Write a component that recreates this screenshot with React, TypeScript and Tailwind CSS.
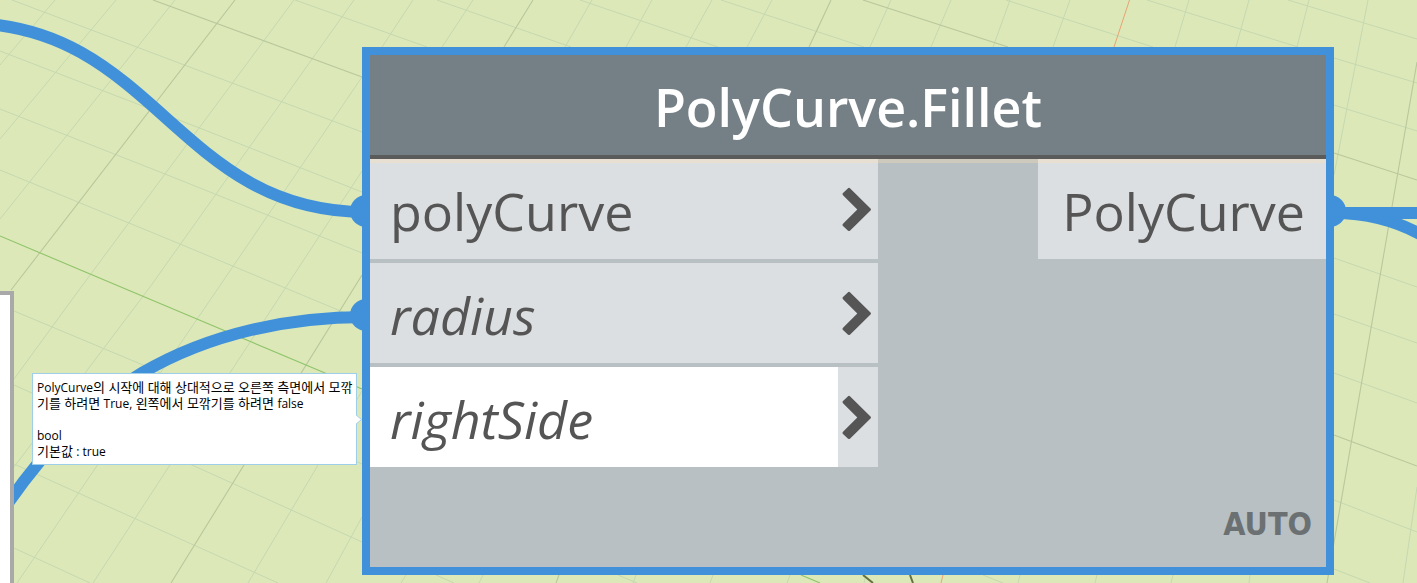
type Segment = [number, number, number, number];

const minorLines: Segment[][] = [
  // receding lines
  [[55, 0, 0, 65]],
  [[116, 0, 0, 139]],
  [[175, 0, 0, 219]],
  [[294, 0, 79, 290], [79, 290, 14, 379]],
  [[354, 0, 150, 287], [150, 287, 14, 467]],
  [[413, 0, 382, 47], [362, 77, 219, 287], [219, 287, 17, 583]],
  [[473, 0, 442, 47], [362, 171, 286, 287], [286, 287, 93, 583]],
  [[592, 0, 565, 47], [362, 391, 248, 583]],
  [[652, 0, 626, 47], [362, 517, 326, 583]],
  [[712, 0, 686, 47], [406, 575, 401, 583]],
  [[772, 0, 747, 47], [483, 575, 479, 583]],
  [[891, 0, 870, 47], [636, 575, 633, 583]],
  [[951, 0, 931, 47], [713, 575, 710, 583]],
  [[1010, 0, 993, 47], [790, 575, 787, 583]],
  [[1070, 0, 1053, 47], [866, 575, 864, 583]],
  [[1189, 0, 1175, 47], [1020, 575, 1018, 583]],
  [[1249, 0, 1236, 47], [1097, 575, 1095, 583]],
  [[1309, 0, 1297, 47], [1173, 575, 1171, 583]],
  [[1368, 0, 1334, 175], [1250, 575, 1249, 583]],
  [[1417, 487, 1403, 583]],
  // crossing lines
  [[12, 0, 362, 132]],
  [[295, 0, 427, 47]],
  [[437, 0, 571, 47]],
  [[580, 0, 718, 47]],
  [[721, 0, 864, 47]],
  [[1006, 0, 1153, 47]],
  [[1147, 0, 1298, 47]],
  [[1288, 0, 1417, 39]],
  [[1334, 58, 1417, 83]],
  [[1334, 105, 1417, 131]],
  [[1334, 258, 1417, 287]],
  [[1334, 314, 1417, 343]],
  [[1334, 373, 1417, 403]],
  [[1334, 500, 1417, 532]],
  [[1334, 569, 1370, 583]],
  [[0, 51, 197, 127], [197, 127, 362, 192]],
  [[0, 109, 165, 174], [165, 174, 362, 253]],
  [[0, 170, 180, 244], [180, 244, 362, 320]],
  [[14, 311, 143, 365], [143, 365, 362, 464]],
  [[14, 385, 192, 465], [192, 465, 362, 542]],
  [[14, 464, 278, 583]],
  [[14, 548, 90, 583]],
  [[436, 575, 454, 583]],
  [[618, 575, 637, 583]],
  [[983, 575, 1003, 583]],
];

const majorLines: Segment[] = [
  [235, 0, 11, 290],
  [533, 0, 504, 47],
  [362, 275, 244, 465],
  [244, 465, 171, 583],
  [831, 0, 809, 47],
  [559, 575, 556, 583],
  [1417, 62, 1327, 583],
  [153, 0, 362, 77],
  [863, 0, 1008, 47],
  [1334, 153, 1417, 180],
  [1334, 435, 1417, 466],
];

const toPath = (lines: Segment[]) =>
  lines.map(([x1, y1, x2, y2]) => `M${x1} ${y1}L${x2} ${y2}`).join("");

function Workspace() {
  return (
    <svg
      className="absolute top-0 left-0"
      width="1417"
      height="583"
      viewBox="0 0 1417 583"
      fill="none"
      aria-hidden="true"
    >
      <path d={toPath(minorLines.flat())} stroke="#c6d8b0" />
      <path d={toPath(majorLines)} stroke="#b9c79b" strokeWidth="1.1" />
      <path d="M0 236L128 290L223 330L325 373L362 389M801 575L820 583" stroke="#8fc46a" strokeWidth="1.1" />
      <path d="M1129.500 0L1114 47M943 575L941 583" stroke="#e8a374" />
      <path d="M863 575L873 583M910 575L913 583" stroke="#68703f" strokeWidth="2" />
      <g stroke="#4191da" strokeWidth="12">
        <path d="M-35 23C155 23 176 212 366 212" />
        <path d="M366 317C290 317 210 333 142 373C90 404 50 443 8 503" />
        <path d="M1334 213H1417M1334 213C1365 213 1392 219 1420 234" />
      </g>
      <g fill="#4191da">
        <circle cx="366" cy="211" r="16" />
        <circle cx="366" cy="315" r="16" />
        <circle cx="1330" cy="211" r="16" />
      </g>
    </svg>
  );
}

function Chevron() {
  return (
    <svg className="h-11 w-10 shrink-0" viewBox="0 0 40 44" fill="none" aria-hidden="true">
      <path
        d="M12.200 1.400Q11 .3 9.800 1.400L5 6Q4 7.100 5 8.200L19.300 22.500L5 36.800Q4 37.900 5 39L9.800 43.500Q11 44.600 12.200 43.500L32.500 23.500Q33.400 22.500 32.500 21.500Z"
        fill="#555"
      />
    </svg>
  );
}

const inputs = [
  { name: "polyCurve", label: "", box: "bg-[#dbdfe1]" },
  { name: "radius", label: "italic", box: "bg-[#dbdfe1]" },
  { name: "rightSide", label: "italic", box: "bg-white" },
];

function PolyCurveNode() {
  return (
    <section className="absolute top-[47px] left-[362px] w-[972px] border-8 border-[#4191da] bg-[#b8c0c3] text-[#555]">
      <header className="flex h-26 items-center justify-center border-b-4 border-[#5b5b5b] bg-[#758086] pt-1 text-white">
        <h1 className="text-[52px] leading-[72px] font-semibold">PolyCurve.Fillet</h1>
      </header>
      <div className="relative flex items-start justify-between text-[52px] leading-[72px]">
        <ul className="flex w-[508px] flex-col gap-1">
          {inputs.map((port) => (
            <li key={port.name}>
              <button type="button" className="flex h-25 w-full items-center bg-[#dbdfe1] text-left">
                <span className={`flex h-full flex-1 items-center pt-1 pl-5 ${port.box} ${port.label}`}>
                  {port.name}
                </span>
                <Chevron />
              </button>
            </li>
          ))}
        </ul>
        <button type="button" className="flex h-25 w-72 items-center justify-end bg-[#dbdfe1] pt-1 pr-[21px]">
          PolyCurve
        </button>
        <div className="absolute inset-x-0 top-0 h-1 bg-[#ffe0b0]/30" />
      </div>
      <footer className="flex h-25 items-center justify-end pt-3.5 pr-3.5">
        <span className="font-['DejaVu_Sans_Condensed','Open_Sans',sans-serif] text-[32px] leading-11 font-bold text-[#6b7072]">
          AUTO
        </span>
      </footer>
    </section>
  );
}

function PortTooltip() {
  return (
    <div
      role="tooltip"
      className="absolute top-[373px] left-8 h-23 w-[325px] border border-[#9fcfe8] bg-white px-1 py-[5px] text-[13px] leading-4 whitespace-nowrap text-black"
    >
      <p>
        <span className="text-xs leading-none">PolyCurve</span>의 시작에 대해 상대적으로 오른쪽 측면에서 모깎
        <br />
        기를 하려면 <span className="text-xs leading-none">True,</span> 왼쪽에서 모깎기를 하려면{" "}
        <span className="text-xs leading-none">false</span>
      </p>
      <p className="mt-4">
        <span className="text-xs leading-none">bool</span>
        <br />
        기본값 <span className="text-xs leading-none">: true</span>
      </p>
      <svg className="absolute top-10 left-full" width="7" height="12" viewBox="0 0 7 12" aria-hidden="true">
        <path d="M-1 0L5.500 5.500L-1 11" fill="#fff" stroke="#9fcfe8" />
      </svg>
    </div>
  );
}

export default function App() {
  return (
    <main className="relative h-screen w-full overflow-hidden bg-[#dce8b8] font-['Open_Sans','Noto_Sans_CJK_KR',sans-serif]">
      <Workspace />
      <div className="absolute top-[291px] -left-4 h-full w-[30px] border-4 border-[#a9a9a9] bg-white" />
      <PolyCurveNode />
      <PortTooltip />
    </main>
  );
}
